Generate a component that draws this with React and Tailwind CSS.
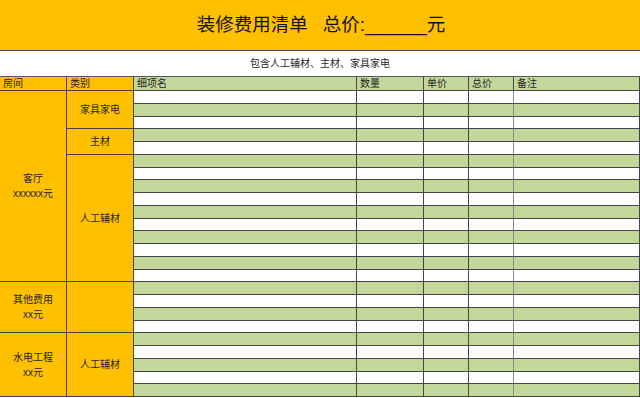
const font = { fontFamily: '"Liberation Sans", "Noto Sans CJK SC", sans-serif' }

const sections = [
  {
    room: ['客厅', 'xxxxxx元'],
    rows: 15,
    groups: [
      { name: '家具家电', rows: 3 },
      { name: '主材', rows: 2 },
      { name: '人工辅材', rows: 10 },
    ],
  },
  { room: ['其他费用', 'xx元'], rows: 4, groups: [{ name: '', rows: 4 }] },
  { room: ['水电工程', 'xx元'], rows: 5, groups: [{ name: '人工辅材', rows: 5 }] },
]

const spans = {
  2: 'row-span-2',
  3: 'row-span-3',
  4: 'row-span-4',
  5: 'row-span-5',
  10: 'row-span-10',
  15: 'row-span-15',
}

const cell = 'border-r border-b border-[#454545]'

function buildCells() {
  const cells = []
  let rowIndex = 0
  sections.forEach((sec, si) => {
    let groupRow = 0
    const groupStarts = {}
    sec.groups.forEach((g) => {
      groupStarts[groupRow] = g
      groupRow += g.rows
    })
    for (let r = 0; r < sec.rows; r++) {
      if (r === 0) {
        cells.push(
          <div
            key={`room-${si}`}
            className={`${spans[sec.rows]} ${cell} bg-[#ffc000] flex flex-col items-center justify-center text-[10px] leading-[15px] text-[#1f1f1f]`}
          >
            <span>{sec.room[0]}</span>
            <span>{sec.room[1]}</span>
          </div>
        )
      }
      const g = groupStarts[r]
      if (g) {
        cells.push(
          <div
            key={`grp-${si}-${r}`}
            className={`${spans[g.rows] ?? ''} ${cell} bg-[#ffc000] flex items-center justify-center text-[10px] text-[#1f1f1f]`}
          >
            {g.name}
          </div>
        )
      }
      const bg = rowIndex % 2 === 1 ? 'bg-[#c4d79b]' : 'bg-white'
      for (let c = 0; c < 5; c++) {
        cells.push(
          <div
            key={`d-${rowIndex}-${c}`}
            className={`${cell} ${bg} ${c === 4 ? 'border-l border-l-[#8a8a8a] -ml-px' : ''}`}
          />
        )
      }
      rowIndex++
    }
  })
  return cells
}

export default function App() {
  return (
    <div className="w-[640px] h-[398px] overflow-hidden bg-white text-[#1f1f1f]" style={font}>
      <div className="h-[51px] bg-[#ffc000] border-b border-[#404040] flex items-center justify-center pl-[2px] text-[#111]">
        <span className="text-[18.5px] leading-none">装修费用清单</span>
        <span className="text-[18.5px] leading-none ml-[15px]">总价:</span>
        <span className="text-[18.5px] leading-none">______</span>
        <span className="text-[18.5px] leading-none">元</span>
      </div>
      <div className="h-[26px] border-b border-[#595959] flex items-center justify-center text-[10px]">
        包含人工辅材、主材、家具家电
      </div>
      <div className="grid grid-cols-[67px_67px_223px_67px_45px_45px_126px] grid-rows-[14px] auto-rows-[12.75px]">
        {['房间', '类别', '细项名', '数量', '单价', '总价', '备注'].map((h, i) => (
          <div
            key={h}
            className={`${cell} ${i < 2 ? 'bg-[#ffc000]' : 'bg-[#c4d79b]'} pl-[3px] text-[10px] leading-[13px]`}
          >
            {h}
          </div>
        ))}
        {buildCells()}
      </div>
    </div>
  )
}
